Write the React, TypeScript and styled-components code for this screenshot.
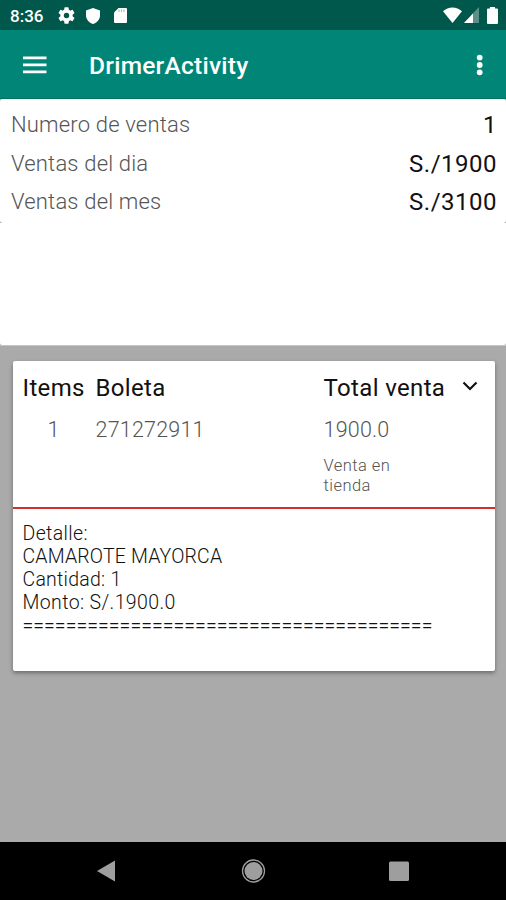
import React from "react";
import styled, { createGlobalStyle } from "styled-components";

const GlobalStyle = createGlobalStyle`
  * { box-sizing: border-box; }
  body { margin: 0; background: #aaaaaa; font-family: Roboto, sans-serif; }
`;

const Screen = styled.div`
  width: 506px;
  height: 900px;
  display: flex;
  flex-direction: column;
  background: #aaaaaa;
  overflow: hidden;
`;

const StatusBar = styled.header`
  height: 30px;
  flex: none;
  display: flex;
  align-items: center;
  justify-content: space-between;
  background: #00574b;
  color: #fff;
`;

const StatusGroup = styled.div<{ $end?: boolean }>`
  display: flex;
  align-items: center;
  padding: ${(p) => (p.$end ? "0 8px 0 0" : "1px 0 0 10px")};
`;

const Clock = styled.span`
  width: 48px;
  font-size: 17px;
  font-weight: 500;
  line-height: 20px;
`;

const Icon = styled.svg<{ $gap?: number; $drop?: number }>`
  display: block;
  flex: none;
  fill: currentColor;
  margin-left: ${(p) => p.$gap ?? 0}px;
  margin-top: ${(p) => p.$drop ?? 0}px;
`;

const AppBar = styled.div`
  height: 69px;
  flex: none;
  display: flex;
  align-items: center;
  padding: 0 22px 0 23px;
  background: #008577;
  border-bottom: 1px solid #00705f;
  color: #fff;
`;

const Title = styled.h1`
  flex: 1;
  margin: 3px 0 0 42px;
  font-size: 24.5px;
  font-weight: 500;
  line-height: 30px;
  letter-spacing: 0.25px;
`;

const Summary = styled.section`
  height: 247px;
  flex: none;
  display: flex;
  flex-direction: column;
  border-bottom: 1px solid #c4c4c4;
`;

const SummaryCard = styled.div`
  height: 124px;
  padding: 6px 9px 0 11px;
  background: #fff;
  border-radius: 3px;
`;

const SummarySpace = styled.div`
  flex: 1;
  background: #fff;
  border-radius: 0 0 2px 2px;
`;

const SummaryRow = styled.div<{ $height: number }>`
  height: ${(p) => p.$height}px;
  display: flex;
  justify-content: space-between;
  line-height: 40px;
`;

const Label = styled.span`
  font-size: 22px;
  font-weight: 300;
  letter-spacing: 0.18px;
  color: #555;
`;

const Value = styled.span`
  font-size: 24px;
  letter-spacing: 0.5px;
  color: #111;
`;

const SaleCard = styled.section`
  width: 482px;
  height: 310px;
  margin: 15px 0 0 12.5px;
  flex: none;
  background: #fff;
  border-radius: 2px;
  box-shadow: 0 2px 4px rgba(0, 0, 0, 0.38);
`;

const SaleHead = styled.div`
  height: 148px;
  padding: 11px 0 0 10px;
  display: grid;
  grid-template-columns: 73px 228px 138px 32px;
  grid-template-rows: 32px 52px auto;
  border-bottom: 2px solid #d32f2f;
`;

const Heading = styled.span`
  font-size: 24px;
  line-height: 32px;
  letter-spacing: 0.35px;
  color: #111;
  white-space: nowrap;
`;

const Cell = styled.span<{ $indent?: number }>`
  padding-left: ${(p) => p.$indent ?? 0}px;
  font-size: 21.5px;
  font-weight: 300;
  line-height: 52px;
  letter-spacing: 0.2px;
  color: #555;
`;

const SaleType = styled.span`
  grid-column: 3;
  width: 90px;
  font-size: 16.5px;
  font-weight: 300;
  line-height: 20px;
  letter-spacing: 0.45px;
  color: #555;
`;

const Detail = styled.div`
  padding: 13px 10px;
  font-size: 19.5px;
  font-weight: 300;
  line-height: 23px;
  color: #111;
`;

const DetailLine = styled.div<{ $spacing?: number }>`
  letter-spacing: ${(p) => p.$spacing ?? 0}px;
  white-space: nowrap;
`;

const NavBar = styled.nav`
  height: 58px;
  flex: none;
  margin-top: auto;
  padding-top: 13px;
  display: flex;
  background: #000;
  color: #9e9e9e;
`;

const NavIcon = styled(Icon)`
  width: 30px;
  height: 30px;
`;

const summary = [
  { label: "Numero de ventas", value: "1", height: 39 },
  { label: "Ventas del dia", value: "S./1900", height: 38 },
  { label: "Ventas del mes", value: "S./3100", height: 38 },
];

const details = [
  { text: "Detalle:", spacing: 0.35 },
  { text: "CAMAROTE MAYORCA", spacing: 0.17 },
  { text: "Cantidad: 1", spacing: 0.25 },
  { text: "Monto: S/.1900.0", spacing: 0.38 },
  { text: "=".repeat(38), spacing: 0 },
];

export default function App() {
  return (
    <>
      <GlobalStyle />
      <Screen>
        <StatusBar>
          <StatusGroup>
            <Clock>8:36</Clock>
            <Icon width="17" height="17" viewBox="2 2 20 20">
              <path d="M19.14 12.94c.04-.3.06-.61.06-.94s-.02-.64-.07-.94l2.03-1.58a.49.49 0 0 0 .12-.61l-1.92-3.32a.49.49 0 0 0-.59-.22l-2.39.96a7 7 0 0 0-1.62-.94l-.36-2.54a.48.48 0 0 0-.48-.41h-3.84a.48.48 0 0 0-.47.41l-.36 2.54c-.59.24-1.13.57-1.62.94l-2.39-.96a.48.48 0 0 0-.59.22L2.74 8.87a.48.48 0 0 0 .12.61l2.03 1.58c-.05.3-.09.63-.09.94s.02.64.07.94l-2.03 1.58a.49.49 0 0 0-.12.61l1.92 3.32c.12.22.37.29.59.22l2.39-.96c.5.38 1.03.7 1.62.94l.36 2.54c.05.24.24.41.48.41h3.84c.24 0 .44-.17.47-.41l.36-2.54a7 7 0 0 0 1.62-.94l2.39.96c.22.08.47 0 .59-.22l1.92-3.32a.48.48 0 0 0-.12-.61zM12 15.2a3.200 3.200 0 1 1 0-6.400 3.200 3.200 0 0 1 0 6.400z" />
            </Icon>
            <Icon $gap={11} width="14" height="16" viewBox="0 0 14 16">
              <path d="M7 0l7 2.600v5C14 11.500 11 15 7 16 3 15 0 11.500 0 7.600v-5z" />
            </Icon>
            <Icon $gap={14} width="13" height="15" viewBox="0 0 13 15">
              <path d="M4.500 0H12q1 0 1 1v13q0 1-1 1H1q-1 0-1-1V4.500z" />
              <path d="M5 1.500v2.500M7.500 1.500v2.500M10 1.500v2.500" stroke="#a9c0bc" strokeWidth="1.200" />
            </Icon>
          </StatusGroup>
          <StatusGroup $end>
            <Icon width="19" height="16" viewBox="0 0 18 16" preserveAspectRatio="none">
              <path d="M9 16L0 4.300C5 -.9 13 -.9 18 4.300z" />
            </Icon>
            <Icon $gap={2} width="15" height="16" viewBox="0 0 15 16">
              <path d="M15 0v16H0z" opacity=".35" />
              <path d="M9 6.400V16H0z" />
            </Icon>
            <Icon $gap={8} width="11" height="17" viewBox="0 0 11 17">
              <path d="M3 0h5v1.500h2q1 0 1 1V16q0 1-1 1H1q-1 0-1-1V2.500q0-1 1-1h2z" />
            </Icon>
          </StatusGroup>
        </StatusBar>

        <AppBar>
          <Icon $drop={1} width="24" height="18" viewBox="0 0 24 18">
            <path d="M0 .5h23.500v2.800H0zM0 7.500h23.500v2.800H0zM0 14.500h23.500v2.800H0z" />
          </Icon>
          <Title>DrimerActivity</Title>
          <Icon $drop={1} width="8" height="22" viewBox="0 0 8 22">
            <circle cx="3.700" cy="3.600" r="2.900" />
            <circle cx="3.700" cy="11" r="2.900" />
            <circle cx="3.700" cy="18.300" r="2.900" />
          </Icon>
        </AppBar>

        <Summary>
          <SummaryCard>
            {summary.map((row) => (
              <SummaryRow key={row.label} $height={row.height}>
                <Label>{row.label}</Label>
                <Value>{row.value}</Value>
              </SummaryRow>
            ))}
          </SummaryCard>
          <SummarySpace />
        </Summary>

        <SaleCard>
          <SaleHead>
            <Heading>Items</Heading>
            <Heading>Boleta</Heading>
            <Heading>Total venta</Heading>
            <Icon $drop={9} width="16" height="10" viewBox="0 0 16 10">
              <path d="M1.500 1.500L8 8l6.500-6.500" fill="none" stroke="#111" strokeWidth="2.200" />
            </Icon>
            <Cell $indent={25}>1</Cell>
            <Cell>271272911</Cell>
            <Cell>1900.0</Cell>
            <SaleType>Venta en tienda</SaleType>
          </SaleHead>
          <Detail>
            {details.map((line) => (
              <DetailLine key={line.text} $spacing={line.spacing}>
                {line.text}
              </DetailLine>
            ))}
          </Detail>
        </SaleCard>

        <NavBar>
          <NavIcon $gap={90} viewBox="0 0 30 30">
            <path d="M25 5.500v21L7 16z" />
          </NavIcon>
          <NavIcon $gap={118} viewBox="0 0 30 30">
            <circle cx="15.500" cy="16" r="9" />
            <circle cx="15.500" cy="16" r="11" fill="none" stroke="currentColor" strokeWidth="1.300" />
          </NavIcon>
          <NavIcon $gap={116} viewBox="0 0 30 30">
            <rect x="5" y="6.500" width="20" height="19.500" rx="1.500" />
          </NavIcon>
        </NavBar>
      </Screen>
    </>
  );
}
